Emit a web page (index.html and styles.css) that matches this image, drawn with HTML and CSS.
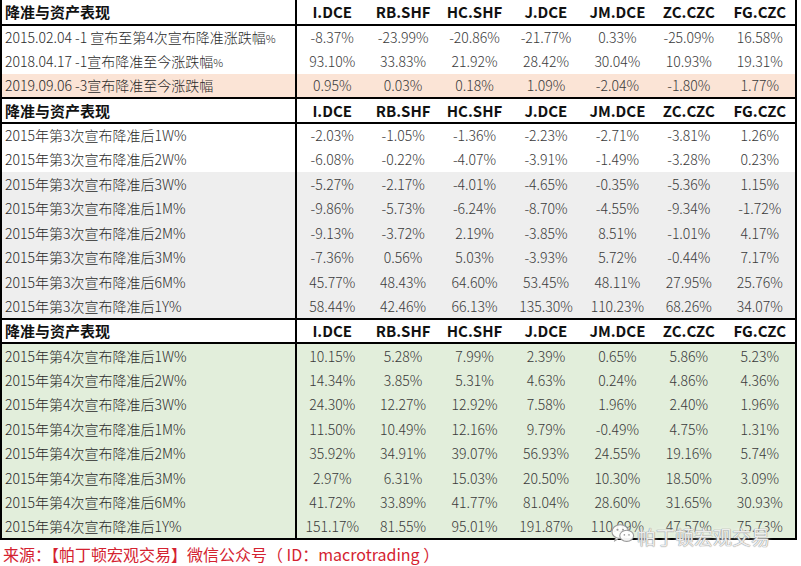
FILE: index.html
```html
<!DOCTYPE html>
<html lang="zh-CN">
<head>
<meta charset="utf-8">
<title>降准与资产表现</title>
<link rel="stylesheet" href="styles.css">
</head>
<body>
<div class="sheet">
<table class="grid">
  <colgroup><col class="c-label"><col span="7"></colgroup>
  <tbody>
    <tr class="head"><td class="lab">降准与资产表现</td><td>I.DCE</td><td>RB.SHF</td><td>HC.SHF</td><td>J.DCE</td><td>JM.DCE</td><td>ZC.CZC</td><td>FG.CZC</td></tr>
    <tr><td class="lab">2015.02.04 -1 宣布至第4次宣布降准涨跌幅<span class="pct">%</span></td><td>-8.37%</td><td>-23.99%</td><td>-20.86%</td><td>-21.77%</td><td>0.33%</td><td>-25.09%</td><td>16.58%</td></tr>
    <tr><td class="lab">2018.04.17 -1宣布降准至今涨跌幅<span class="pct">%</span></td><td>93.10%</td><td>33.83%</td><td>21.92%</td><td>28.42%</td><td>30.04%</td><td>10.93%</td><td>19.31%</td></tr>
    <tr class="pink"><td class="lab">2019.09.06 -3宣布降准至今涨跌幅</td><td>0.95%</td><td>0.03%</td><td>0.18%</td><td>1.09%</td><td>-2.04%</td><td>-1.80%</td><td>1.77%</td></tr>

    <tr class="head"><td class="lab">降准与资产表现</td><td>I.DCE</td><td>RB.SHF</td><td>HC.SHF</td><td>J.DCE</td><td>JM.DCE</td><td>ZC.CZC</td><td>FG.CZC</td></tr>
    <tr><td class="lab">2015年第3次宣布降准后1W%</td><td>-2.03%</td><td>-1.05%</td><td>-1.36%</td><td>-2.23%</td><td>-2.71%</td><td>-3.81%</td><td>1.26%</td></tr>
    <tr><td class="lab">2015年第3次宣布降准后2W%</td><td>-6.08%</td><td>-0.22%</td><td>-4.07%</td><td>-3.91%</td><td>-1.49%</td><td>-3.28%</td><td>0.23%</td></tr>
    <tr class="gray"><td class="lab">2015年第3次宣布降准后3W%</td><td>-5.27%</td><td>-2.17%</td><td>-4.01%</td><td>-4.65%</td><td>-0.35%</td><td>-5.36%</td><td>1.15%</td></tr>
    <tr class="gray"><td class="lab">2015年第3次宣布降准后1M%</td><td>-9.86%</td><td>-5.73%</td><td>-6.24%</td><td>-8.70%</td><td>-4.55%</td><td>-9.34%</td><td>-1.72%</td></tr>
    <tr class="gray"><td class="lab">2015年第3次宣布降准后2M%</td><td>-9.13%</td><td>-3.72%</td><td>2.19%</td><td>-3.85%</td><td>8.51%</td><td>-1.01%</td><td>4.17%</td></tr>
    <tr class="gray"><td class="lab">2015年第3次宣布降准后3M%</td><td>-7.36%</td><td>0.56%</td><td>5.03%</td><td>-3.93%</td><td>5.72%</td><td>-0.44%</td><td>7.17%</td></tr>
    <tr class="gray"><td class="lab">2015年第3次宣布降准后6M%</td><td>45.77%</td><td>48.43%</td><td>64.60%</td><td>53.45%</td><td>48.11%</td><td>27.95%</td><td>25.76%</td></tr>
    <tr class="gray"><td class="lab">2015年第3次宣布降准后1Y%</td><td>58.44%</td><td>42.46%</td><td>66.13%</td><td>135.30%</td><td>110.23%</td><td>68.26%</td><td>34.07%</td></tr>

    <tr class="head"><td class="lab">降准与资产表现</td><td>I.DCE</td><td>RB.SHF</td><td>HC.SHF</td><td>J.DCE</td><td>JM.DCE</td><td>ZC.CZC</td><td>FG.CZC</td></tr>
    <tr class="green"><td class="lab">2015年第4次宣布降准后1W%</td><td>10.15%</td><td>5.28%</td><td>7.99%</td><td>2.39%</td><td>0.65%</td><td>5.86%</td><td>5.23%</td></tr>
    <tr class="green"><td class="lab">2015年第4次宣布降准后2W%</td><td>14.34%</td><td>3.85%</td><td>5.31%</td><td>4.63%</td><td>0.24%</td><td>4.86%</td><td>4.36%</td></tr>
    <tr class="green"><td class="lab">2015年第4次宣布降准后3W%</td><td>24.30%</td><td>12.27%</td><td>12.92%</td><td>7.58%</td><td>1.96%</td><td>2.40%</td><td>1.96%</td></tr>
    <tr class="green"><td class="lab">2015年第4次宣布降准后1M%</td><td>11.50%</td><td>10.49%</td><td>12.16%</td><td>9.79%</td><td>-0.49%</td><td>4.75%</td><td>1.31%</td></tr>
    <tr class="green"><td class="lab">2015年第4次宣布降准后2M%</td><td>35.92%</td><td>34.91%</td><td>39.07%</td><td>56.93%</td><td>24.55%</td><td>19.16%</td><td>5.74%</td></tr>
    <tr class="green"><td class="lab">2015年第4次宣布降准后3M%</td><td>2.97%</td><td>6.31%</td><td>15.03%</td><td>20.50%</td><td>10.30%</td><td>18.50%</td><td>3.09%</td></tr>
    <tr class="green"><td class="lab">2015年第4次宣布降准后6M%</td><td>41.72%</td><td>33.89%</td><td>41.77%</td><td>81.04%</td><td>28.60%</td><td>31.65%</td><td>30.93%</td></tr>
    <tr class="green"><td class="lab">2015年第4次宣布降准后1Y%</td><td>151.17%</td><td>81.55%</td><td>95.01%</td><td>191.87%</td><td>110.09%</td><td>47.57%</td><td>75.73%</td></tr>
  </tbody>
</table>
<div class="watermark">
  <svg class="wm-icon" viewBox="0 0 26 22" width="24" height="21" aria-hidden="true">
    <ellipse cx="10" cy="9" rx="9" ry="7.5" fill="rgba(255,255,255,0.9)" stroke="#9a9a9a" stroke-width="1.2"/>
    <path d="M5 15.5 L4 19 L8.5 16.3" fill="rgba(255,255,255,0.9)" stroke="#9a9a9a" stroke-width="1.1"/>
    <ellipse cx="17" cy="13.5" rx="7.5" ry="6" fill="rgba(255,255,255,0.95)" stroke="#9a9a9a" stroke-width="1.2"/>
    <circle cx="7" cy="7" r="1.1" fill="#9a9a9a"/>
    <circle cx="13" cy="7" r="1.1" fill="#9a9a9a"/>
    <circle cx="14.5" cy="12.5" r="0.9" fill="#9a9a9a"/>
    <circle cx="19.5" cy="12.5" r="0.9" fill="#9a9a9a"/>
  </svg>
  <span class="wm-text">帕丁顿宏观交易</span>
</div>
<p class="source">来源：【帕丁顿宏观交易】微信公众号（ ID：macrotrading ）</p>
</div>
</body>
</html>
```

FILE: styles.css
```css
html, body {
  margin: 0;
  padding: 0;
  background: #ffffff;
}

.sheet {
  position: relative;
  width: 801px;
  height: 566px;
  overflow: hidden;
  font-family: "Noto Sans CJK SC", "Noto Sans", sans-serif;
}

.grid {
  width: 797px;
  border-collapse: collapse;
  table-layout: fixed;
  border: 2px solid #000;
  border-top: 0;
  color: #3a3a3a;
  font-size: 14px;
  font-weight: 300;
}

.c-label {
  width: 295px;
}

.grid td {
  height: 24.5px;
  padding: 0;
  text-align: center;
  white-space: nowrap;
  line-height: 1;
  box-sizing: border-box;
}

.grid td.lab {
  text-align: left;
  padding-left: 3px;
  border-right: 2px solid #000;
  overflow: hidden;
  color: #2a2a2a;
}

.pct {
  font-size: 11px;
}

.head td {
  border-top: 2px solid #000;
  border-bottom: 2px solid #000;
  font-weight: bold;
  font-size: 15px;
  color: #111;
  background: #ffffff;
}

.head td.lab {
  color: #111;
}

.grid tr:first-child td {
  border-top: 0;
}

.pink td { background: #fbe4d6; }
.gray td { background: #eeeeee; }
.green td { background: #e2eedb; }

.watermark {
  position: absolute;
  left: 611px;
  top: 517px;
  display: flex;
  align-items: center;
  gap: 2px;
}

.wm-text {
  font-size: 19px;
  font-family: "Noto Sans CJK SC", sans-serif;
  color: rgba(255, 255, 255, 0.85);
  text-shadow: 0 0 1px #8a8a8a, 0 0 1px #8a8a8a, 0 0 4px rgba(255, 255, 255, 0.9);
  margin-top: 6px;
}

.source {
  margin: 0;
  padding: 4px 0 0 3px;
  color: #d42230;
  font-size: 16px;
  line-height: 20px;
}
```
